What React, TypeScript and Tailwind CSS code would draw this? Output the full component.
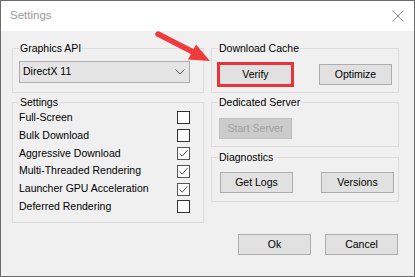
import React from 'react';

const font = { fontFamily: '"Liberation Sans", Arial, sans-serif' };

function Btn({ label, disabled, className = '' }: { label: string; disabled?: boolean; className?: string }) {
  return (
    <button
      className={`w-[73px] h-[21px] border text-[10.5px] leading-none flex items-center justify-center ${
        disabled ? 'bg-[#cccccc] border-[#bfbfbf] text-[#a0a0a0]' : 'bg-[#e1e1e1] border-[#adadad] text-black'
      } ${className}`}
    >
      {label}
    </button>
  );
}

function Group({ title, className = '', children }: { title: string; className?: string; children: React.ReactNode }) {
  return (
    <fieldset className={`border border-[#dcdcdc] ${className}`}>
      <legend className="ml-[6px] px-[1px] text-[10.5px] leading-[16px] text-black">{title}</legend>
      {children}
    </fieldset>
  );
}

function Check({ checked }: { checked: boolean }) {
  return (
    <span className={`w-[13px] h-[13px] bg-white border flex items-center justify-center ${checked ? 'border-[#555]' : 'border-[#333]'}`}>
      {checked && (
        <svg width="11" height="11" viewBox="0 0 11 11">
          <path d="M1.5 5.5 L4.2 8.2 L9.5 2.2" fill="none" stroke="#555" strokeWidth="1" />
        </svg>
      )}
    </span>
  );
}

const options = [
  { label: 'Full-Screen', checked: false },
  { label: 'Bulk Download', checked: false },
  { label: 'Aggressive Download', checked: true },
  { label: 'Multi-Threaded Rendering', checked: true },
  { label: 'Launcher GPU Acceleration', checked: true },
  { label: 'Deferred Rendering', checked: false },
];

export default function App() {
  return (
    <div className="relative w-[415px] h-[277px] border border-[#6b6b6b] bg-[#f0f0f0] flex flex-col overflow-hidden" style={font}>
      {/* title bar */}
      <div className="h-[30px] bg-white flex items-center justify-between pl-[9px] pr-[10px]">
        <span className="text-[11.5px] text-[#999999]">Settings</span>
        <svg width="12" height="12" viewBox="0 0 12 12">
          <path d="M0.5 0.5 L11.5 11.5 M11.5 0.5 L0.5 11.5" stroke="#8a8a8a" strokeWidth="1" />
        </svg>
      </div>

      {/* body */}
      <div className="flex gap-[7px] pl-[11px] pt-[9px]">
        <div className="w-[192px] flex flex-col gap-[1px]">
          <Group title="Graphics API" className="h-[53px]">
            <div className="ml-[6px] mt-[5px] w-[171px] h-[22px] bg-[#e5e5e5] border border-[#adadad] flex items-center justify-between pl-[3px] pr-[4px]">
              <span className="text-[10.5px] text-black">DirectX 11</span>
              <svg width="10" height="6" viewBox="0 0 10 6">
                <path d="M0.5 0.5 L5 5 L9.5 0.5" fill="none" stroke="#555" strokeWidth="1" />
              </svg>
            </div>
          </Group>
          <Group title="Settings" className="h-[129px]">
            <div className="flex flex-col pl-[6px] pr-[13px] -mt-[1px]">
              {options.map((o) => (
                <div key={o.label} className="h-[17.8px] flex items-center justify-between">
                  <span className="text-[10.5px] text-black">{o.label}</span>
                  <Check checked={o.checked} />
                </div>
              ))}
            </div>
          </Group>
        </div>

        <div className="w-[188px] flex flex-col">
          <Group title="Download Cache" className="h-[53px]">
            <div className="flex justify-between pl-[7px] pr-[6px] mt-[8px]">
              <Btn label="Verify" className="outline-3 outline-[#e8333a] outline-offset-[-1px]" />
              <Btn label="Optimize" />
            </div>
          </Group>
          <Group title="Dedicated Server" className="h-[53px] mt-[1px]">
            <div className="pl-[7px] mt-[8px]">
              <Btn label="Start Server" disabled />
            </div>
          </Group>
          <Group title="Diagnostics" className="h-[53px] mt-[2px]">
            <div className="flex justify-between pl-[8px] pr-[4px] mt-[7px]">
              <Btn label="Get Logs" />
              <Btn label="Versions" />
            </div>
          </Group>
        </div>
      </div>

      {/* footer */}
      <div className="flex justify-end gap-[14px] pr-[16px] mt-[11px]">
        <Btn label="Ok" />
        <Btn label="Cancel" />
      </div>

      {/* annotation arrow */}
      <svg className="absolute left-0 top-0 pointer-events-none" width="415" height="277" viewBox="0 0 415 277">
        <line x1="157" y1="33" x2="193" y2="51.5" stroke="#ef3b3b" strokeWidth="5.5" strokeLinecap="round" />
        <polygon points="209,60 187,58.5 195,43.5" fill="#ef3b3b" />
      </svg>
    </div>
  );
}
